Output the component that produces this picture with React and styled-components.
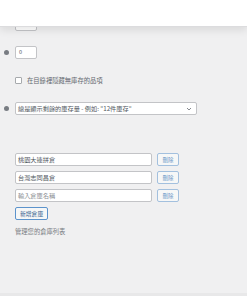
import styled, { createGlobalStyle } from "styled-components";

const Global = createGlobalStyle`
  html, body { margin: 0; padding: 0; background: #f0f0f1; }
  body { font-family: "Noto Sans CJK TC", "Noto Sans", sans-serif; color: #50575e; }
`;

const Page = styled.div`
  position: relative;
  height: 296px;
  display: flex;
  flex-direction: column;
  overflow: hidden;
`;

// 위를 덮는 흰 헤더
const TopBar = styled.div`
  position: absolute;
  top: 0;
  left: 0;
  right: 0;
  height: 26px;
  background: #fff;
  box-shadow: 0 1px 0 #dcdcde, 0 4px 8px rgba(0, 0, 0, 0.1);
  z-index: 2;
`;

const Main = styled.div`
  flex: 1;
  padding-top: 18px;
`;

const Footer = styled.div`
  height: 3px;
  background: #e8e8e9;
`;

const Row = styled.div`
  display: flex;
  align-items: center;
  gap: 6px;
  padding-left: 4px;
  margin-top: ${(p) => p.mt || 0}px;
`;

const Help = styled.span`
  width: 5px;
  height: 5px;
  border-radius: 50%;
  background: #787c82;
  flex: none;
`;

const SmallInput = styled.div`
  box-sizing: border-box;
  width: 22px;
  height: 13px;
  background: #fff;
  border: 1px solid #c3c4c7;
  border-radius: 2px;
  font-size: 5.5px;
  line-height: 11px;
  padding-left: 3px;
  color: #50575e;
`;

const CheckRow = styled.label`
  display: flex;
  align-items: center;
  gap: 5px;
  margin: 17px 0 0 15px;
  height: 8px;
  font-size: 6.3px;
  color: #646970;
`;

const Box = styled.span`
  box-sizing: border-box;
  width: 7px;
  height: 7px;
  background: #fff;
  border: 1px solid #a7aaad;
  border-radius: 1px;
  flex: none;
`;

const Select = styled.div`
  box-sizing: border-box;
  width: 182px;
  height: 13px;
  display: flex;
  align-items: center;
  justify-content: space-between;
  padding: 0 4px 0 2px;
  background: #fff;
  border: 1px solid #c3c4c7;
  border-radius: 2px;
  font-size: 6.2px;
  color: #50575e;
  white-space: nowrap;
`;

const List = styled.div`
  margin: 38px 0 0 15px;
  display: flex;
  flex-direction: column;
  gap: 5px;
`;

const Item = styled.div`
  display: flex;
  align-items: center;
  gap: 5px;
`;

const TextBox = styled.div`
  box-sizing: border-box;
  width: 137px;
  height: 13px;
  padding-left: 2px;
  background: #fff;
  border: 1px solid #c3c4c7;
  border-radius: 2px;
  font-size: 6.2px;
  line-height: 11px;
  color: ${(p) => (p.placeholder ? "#8c8f94" : "#50575e")};
`;

const Button = styled.div`
  box-sizing: border-box;
  height: 13px;
  padding: 0 ${(p) => (p.primary ? 4 : 4.5)}px;
  display: flex;
  align-items: center;
  background: #f6f7f7;
  border: 1px solid ${(p) => (p.primary ? "#5c93cc" : "#a3c0de")};
  border-radius: 2px;
  font-size: ${(p) => (p.primary ? 5.8 : 5.4)}px;
  color: ${(p) => (p.primary ? "#35618f" : "#6a98c8")};
  white-space: nowrap;
  align-self: flex-start;
`;

const Desc = styled.p`
  margin: 2px 0 0;
  font-size: 6.3px;
  color: #787c82;
`;

const Chevron = () => (
  <svg width="6" height="4" viewBox="0 0 6 4">
    <path d="M1 1l2 2 2-2" fill="none" stroke="#787c82" strokeWidth="0.9" />
  </svg>
);

const stores = ["桃園大連拼倉", "台灣志同昌倉"];

export default function App() {
  return (
    <Page>
      <Global />
      <TopBar />
      <Main>
        <Row>
          <Help />
          <SmallInput />
        </Row>
        <Row mt={15}>
          <Help />
          <SmallInput>0</SmallInput>
        </Row>
        <CheckRow>
          <Box />
          在目錄裡隱藏無庫存的品項
        </CheckRow>
        <Row mt={18}>
          <Help />
          <Select>
            <span>總是顯示剩餘的庫存量 - 例如: "12件庫存"</span>
            <Chevron />
          </Select>
        </Row>
        <List>
          {stores.map((s) => (
            <Item key={s}>
              <TextBox>{s}</TextBox>
              <Button>刪除</Button>
            </Item>
          ))}
          <Item>
            <TextBox placeholder>輸入倉庫名稱</TextBox>
            <Button>刪除</Button>
          </Item>
          <Button primary>新增倉庫</Button>
          <Desc>管理您的倉庫列表</Desc>
        </List>
      </Main>
      <Footer />
    </Page>
  );
}
